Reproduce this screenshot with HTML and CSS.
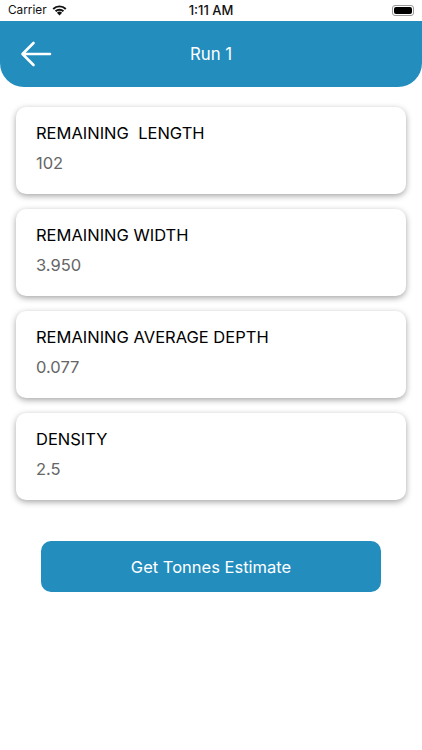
FILE: index.html
```html
<!DOCTYPE html>
<html>
<head>
  <title>Run 1</title>
  <link rel="stylesheet" href="styles.css">
</head>
<body>
  <div class="status-bar">
    <div class="status-left">
      <span>Carrier</span>
      <svg class="wifi" width="15" height="12" viewBox="0 0 16 12">
        <path d="M8 11.8 5.2 9a4 4 0 0 1 5.6 0z" fill="#111"/>
        <path d="M1.3 4.9a9.5 9.5 0 0 1 13.4 0" fill="none" stroke="#111" stroke-width="2.1"/>
        <path d="M3.8 7.4a6 6 0 0 1 8.4 0" fill="none" stroke="#111" stroke-width="2.1"/>
      </svg>
    </div>
    <div class="status-time">1:11 AM</div>
    <div class="battery"><div class="battery-fill"></div></div>
  </div>

  <div class="header">
    <svg class="back" width="32" height="26" viewBox="0 0 32 26">
      <path d="M30 13H3M13.5 2 2.5 13l11 11" fill="none" stroke="#fff" stroke-width="2.6" stroke-linecap="round" stroke-linejoin="round"/>
    </svg>
    <div class="title">Run 1</div>
  </div>

  <div class="cards">
    <div class="card">
      <div class="card-label">REMAINING&nbsp; LENGTH</div>
      <div class="card-value">102</div>
    </div>
    <div class="card">
      <div class="card-label">REMAINING WIDTH</div>
      <div class="card-value">3.950</div>
    </div>
    <div class="card">
      <div class="card-label">REMAINING AVERAGE DEPTH</div>
      <div class="card-value">0.077</div>
    </div>
    <div class="card">
      <div class="card-label">DENSITY</div>
      <div class="card-value">2.5</div>
    </div>
  </div>

  <div class="actions">
    <button class="estimate-btn">Get Tonnes Estimate</button>
  </div>
</body>
</html>
```

FILE: styles.css
```css
body { margin: 0; background: #fff; font-family: Inter, "Liberation Sans", sans-serif; }
.status-bar { height: 20px; padding: 0 8px; display: grid; grid-template-columns: 1fr auto 1fr; align-items: center; font-size: 11.8px; color: #111; }
.status-left { display: flex; align-items: center; gap: 5px; }
.status-time { font-weight: 500; font-size: 13px; }
.battery { justify-self: end; width: 22px; height: 11px; padding: 1px; border: 1px solid #999; border-radius: 3px; box-sizing: border-box; }
.battery-fill { height: 100%; background: #000; border-radius: 2px; }
.header { height: 66px; margin-top: 1px; background: #238dbe; border-radius: 0 0 24px 24px; position: relative; display: flex; align-items: center; justify-content: center; }
.back { position: absolute; left: 20px; top: 20px; }
.title { color: #fff; font-size: 16.8px; font-weight: 400; }
.cards { padding: 20px 16px 0; display: flex; flex-direction: column; gap: 15px; }
.card { height: 87px; box-sizing: border-box; padding: 16px 20px 0; background: #fff; border-radius: 10px; box-shadow: 0 2px 6px rgba(0, 0, 0, 0.36); }
.card-label { font-size: 16.5px; line-height: 20px; color: #000; }
.card-value { font-size: 16.5px; line-height: 20px; margin-top: 10px; color: #666; }
.actions { display: flex; justify-content: center; padding-top: 41px; }
.estimate-btn { width: 340px; height: 51px; border: none; border-radius: 10px; background: #238dbe; color: #fff; font-family: inherit; font-size: 16.5px; }
```
